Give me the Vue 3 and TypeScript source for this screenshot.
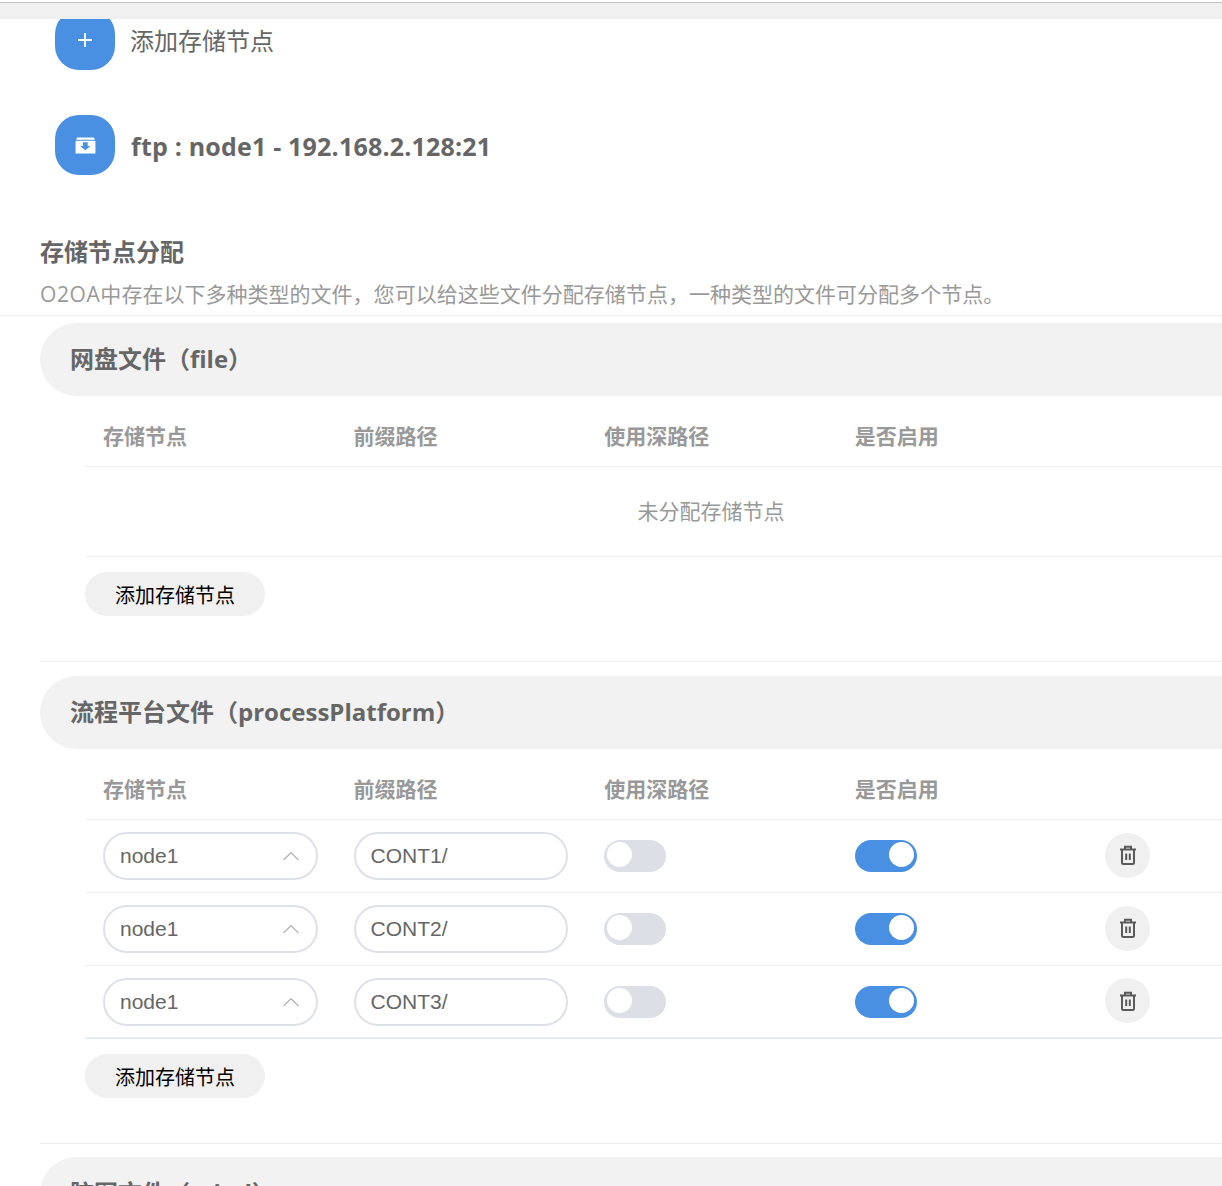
<script setup lang="ts">
interface Row { node: string; prefix: string }
interface Section { title: string; rows: Row[] }

const columns: string[] = ['存储节点', '前缀路径', '使用深路径', '是否启用']

const sections: Section[] = [
  { title: '网盘文件（file）', rows: [] },
  {
    title: '流程平台文件（processPlatform）',
    rows: [
      { node: 'node1', prefix: 'CONT1/' },
      { node: 'node1', prefix: 'CONT2/' },
      { node: 'node1', prefix: 'CONT3/' }
    ]
  }
]
</script>

<template>
  <div class="page">
    <div class="topbar"></div>
    <main class="content">
      <div class="node-list">
        <div class="node-row">
          <span class="tile">
            <svg width="16" height="16" viewBox="0 0 16 16" fill="none" stroke="#fff" stroke-width="1.8">
              <path d="M8 1v14M1 8h14" />
            </svg>
          </span>
          <span class="add-label">添加存储节点</span>
        </div>
        <div class="node-row">
          <span class="tile">
            <svg width="21" height="17" viewBox="0 0 22 18">
              <path d="M3 0.5h16a1.500 1.500 0 0 1 1.400 1L20.800 3H1.200l.4-1.500A1.500 1.500 0 0 1 3 .5z" fill="#fff" />
              <path d="M1 4h20.500v13.500H.5V5z" fill="#fff" />
              <path d="M8.300 5.500h5v4h3L10.800 14 5.300 9.500h3z" fill="#4a90e2" />
            </svg>
          </span>
          <span class="node-name">ftp : node1 - 192.168.2.128:21</span>
        </div>
      </div>

      <header class="intro">
        <h2 class="intro-title">存储节点分配</h2>
        <p class="intro-desc"><span class="brand">O2OA</span>中存在以下多种类型的文件，您可以给这些文件分配存储节点，一种类型的文件可分配多个节点。</p>
      </header>

      <section v-for="section in sections" :key="section.title" class="section">
        <h3 class="section-title">{{ section.title }}</h3>
        <div class="table">
          <div class="grid head">
            <span v-for="col in columns" :key="col">{{ col }}</span>
          </div>
          <div v-if="section.rows.length === 0" class="empty">未分配存储节点</div>
          <div v-for="(row, i) in section.rows" :key="row.prefix" class="grid row" :class="{ last: i === section.rows.length - 1 }">
            <div class="field select">
              <span>{{ row.node }}</span>
              <svg width="18" height="10" viewBox="0 0 18 10" fill="none" stroke="#b4b4b8" stroke-width="1.2">
                <path d="M1.500 9 9 1.700 16.500 9" />
              </svg>
            </div>
            <div class="field">{{ row.prefix }}</div>
            <div class="toggle"><span class="knob"></span></div>
            <div class="toggle on"><span class="knob"></span></div>
            <div class="trash">
              <svg width="18" height="20" viewBox="0 0 18 20" fill="none" stroke="#5a5a5a" stroke-width="2">
                <path d="M1 4.500h16M6 4.500V1.800h6v2.700M3 4.500V17.500a1.500 1.500 0 0 0 1.500 1.500h9a1.500 1.500 0 0 0 1.500-1.500V4.500M7.200 8.500v6.500M10.800 8.500v6.500" />
              </svg>
            </div>
          </div>
        </div>
        <button class="add-btn" type="button">添加存储节点</button>
      </section>

      <section class="section">
        <h3 class="section-title">脑图文件（mind）</h3>
      </section>
    </main>
  </div>
</template>

<style>
html,
body {
  margin: 0;
  background: #fff;
  overflow: hidden;
}
</style>

<style scoped>
.page {
  width: 1222px;
  height: 1186px;
  overflow: hidden;
  background: #fff;
  font-family: "Open Sans", "Noto Sans CJK SC", sans-serif;
  color: #666;
}
.topbar {
  height: 16px;
  margin-top: 2px;
  border-top: 1px solid #c4c4c4;
  background: #f0f0f0;
}
.content {
  height: 1167px;
  overflow: hidden;
}
.node-list {
  margin-top: -9px;
  padding-left: 55px;
  display: flex;
  flex-direction: column;
  gap: 45px;
}
.node-row {
  display: flex;
  align-items: center;
  gap: 15px;
  height: 60px;
}
.tile {
  width: 60px;
  height: 60px;
  flex: none;
  display: flex;
  align-items: center;
  justify-content: center;
  border-radius: 24px;
  background: #4a90e2;
}
.add-label {
  font-size: 24px;
  line-height: 36px;
  margin-top: 1px;
}
.node-name {
  font-size: 25px;
  font-weight: 700;
  line-height: 36px;
  letter-spacing: 0.2px;
  margin: 2px 0 0 1px;
}
.intro {
  margin-top: 59px;
  padding: 0 0 3px 40px;
  border-bottom: 1px solid #eeeef3;
}
.intro-title {
  margin: 0;
  font-size: 24px;
  font-weight: 700;
  line-height: 36px;
}
.intro-desc {
  margin: 6px 0 0;
  font-size: 21px;
  line-height: 36px;
  color: #999;
  white-space: nowrap;
  letter-spacing: 0.02px;
}
.brand {
  letter-spacing: 0.6px;
}
.section {
  margin: 7px 0 0 40px;
  padding-bottom: 45px;
  width: 1400px;
  border-bottom: 1px solid #eeeeef;
}
.section + .section {
  margin-top: 14px;
}
.section:last-child {
  margin-top: 13px;
  border-bottom: 0;
}
.section-title {
  margin: 0;
  height: 73px;
  padding-left: 30px;
  border-radius: 36.5px 0 0 36.5px;
  background: #f2f2f2;
  font-size: 24px;
  font-weight: 700;
  line-height: 71px;
}
.table {
  margin: 14px 0 0 45px;
}
.grid {
  display: grid;
  grid-template-columns: repeat(5, 250.6px);
  align-items: center;
  padding-left: 18px;
  border-bottom: 1px solid #eeeef3;
}
.head {
  height: 50px;
  padding-bottom: 6px;
  font-size: 21px;
  font-weight: 700;
  color: #999;
}
.empty {
  height: 85px;
  padding-bottom: 4px;
  width: 1252px;
  display: flex;
  align-items: center;
  justify-content: center;
  font-size: 21px;
  color: #999;
  border-bottom: 1px solid #eeeef3;
}
.row {
  height: 72px;
}
.row.last {
  height: 71px;
  border-bottom: 2px solid #e8edf3;
}
.field {
  width: 214.5px;
  height: 48px;
  box-sizing: border-box;
  display: flex;
  align-items: center;
  justify-content: space-between;
  padding: 0 16px 0 15px;
  border: 2px solid #dfe1e8;
  border-radius: 24px;
  font-family: "Liberation Sans", sans-serif;
  font-size: 21px;
  color: #666;
}
.toggle {
  width: 62px;
  height: 32px;
  box-sizing: border-box;
  padding: 3px;
  display: flex;
  border-radius: 16px;
  background: #dcdfe6;
}
.toggle.on {
  justify-content: flex-end;
  background: #4a90e2;
}
.knob {
  width: 25px;
  height: 25px;
  margin-top: -1px;
  border-radius: 50%;
  background: #fff;
}
.trash {
  width: 45px;
  height: 45px;
  margin-top: -2px;
  display: flex;
  align-items: center;
  justify-content: center;
  border-radius: 50%;
  background: #f0f0f0;
}
.add-btn {
  display: block;
  margin: 15px 0 0 45px;
  width: 180px;
  height: 44px;
  padding: 0;
  border: 0;
  border-radius: 22px;
  background: #f0f0f0;
  font-family: "Noto Sans CJK SC", sans-serif;
  font-size: 20px;
  color: #000;
}
</style>
